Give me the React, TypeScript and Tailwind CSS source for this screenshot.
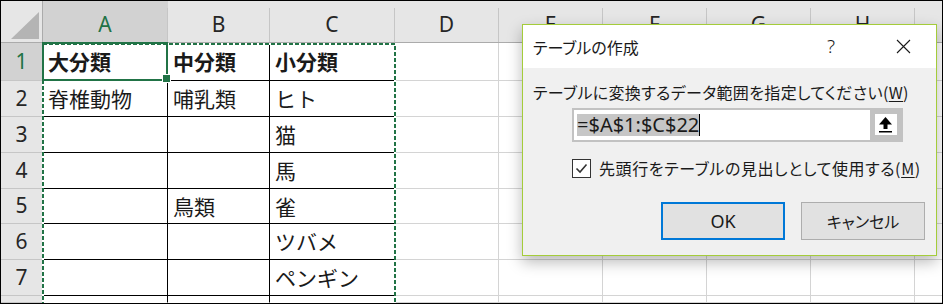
const cols = ['A', 'B', 'C', 'D', 'E', 'F', 'G', 'H', 'I'];

const rows = [
  { n: '1', cells: ['大分類', '中分類', '小分類'], bold: true },
  { n: '2', cells: ['脊椎動物', '哺乳類', 'ヒト'] },
  { n: '3', cells: ['', '', '猫'] },
  { n: '4', cells: ['', '', '馬'] },
  { n: '5', cells: ['', '鳥類', '雀'] },
  { n: '6', cells: ['', '', 'ツバメ'] },
  { n: '7', cells: ['', '', 'ペンギン'] },
  { n: '', cells: ['', '', ''] },
];

function Sheet() {
  return (
    <div className="grid h-full w-[1050px] grid-cols-[42px_125px_102px_125px_104px_104px_104px_104px_104px_104px] grid-rows-[42px_38px_36px_36px_36px_35px_36px_36px_1fr]">
      {/* corner */}
      <div className="border-b border-r border-[#ababab] bg-[#e6e6e6]">
        <svg width="41" height="41" viewBox="0 0 41 41">
          <polygon points="38,11 38,38 10,38" fill="#b4b4b4" />
        </svg>
      </div>
      {cols.map((c) => (
        <div key={c} className={`flex flex-col border-b border-[#ababab] ${c === 'A' ? 'bg-[#d2d2d2]' : 'bg-[#e6e6e6]'}`}>
          <div className="h-[7px]" />
          <div className={`flex flex-1 items-center justify-center border-r border-[#c6c6c6] font-['Noto_Sans',sans-serif] text-[21px] ${c === 'A' ? 'text-[#217346]' : 'text-[#262626]'}`}>
            {c}
          </div>
        </div>
      ))}
      {rows.map((r, ri) => (
        <div key={ri} className="contents">
          <div className={`flex items-center justify-center border-b border-r border-b-[#c6c6c6] border-r-[#ababab] font-['Noto_Sans',sans-serif] text-[21px] ${ri === 0 ? 'bg-[#d2d2d2] text-[#217346]' : 'bg-[#e6e6e6] text-[#262626]'}`}>
            {r.n}
          </div>
          {cols.map((c, ci) => {
            const inTable = ci < 3;
            return (
              <div
                key={c}
                className={`flex items-center overflow-hidden whitespace-nowrap border-b border-r pl-[5px] font-['Noto_Sans_CJK_JP',sans-serif] text-[21px] leading-none text-[#1a1a1a] ${inTable ? (ri < 7 ? 'border-b-black' : 'border-b-transparent') : 'border-b-[#d4d4d4]'} ${ci < 2 ? 'border-r-black' : 'border-r-[#d4d4d4]'} ${r.bold ? 'font-bold' : ''}`}
              >
                {inTable ? r.cells[ci] : ''}
              </div>
            );
          })}
        </div>
      ))}
    </div>
  );
}

function CreateTableDialog() {
  return (
    <div className="absolute left-[521px] top-[23px] flex h-[232px] w-[415px] flex-col border border-[#a4cc3a] bg-[#f0f0f0] font-['Noto_Sans_CJK_JP',sans-serif] text-[#1a1a1a] shadow-[0_6px_14px_rgba(0,0,0,0.28)] [font-feature-settings:'palt']">
      <div className="flex h-[43px] items-center bg-white pl-[10px] pr-[10px]">
        <span className="text-[16px]">テーブルの作成</span>
        <span className="ml-auto mr-[29px] w-[40px] text-center font-['Noto_Sans',sans-serif] text-[19px] font-light">?</span>
        <div className="flex w-[46px] items-center justify-center">
          <svg width="15" height="15" viewBox="0 0 15 15">
            <path d="M1 1L14 14M14 1L1 14" stroke="#1a1a1a" strokeWidth="1.1" />
          </svg>
        </div>
      </div>
      <div className="flex flex-1 flex-col pl-[10px] pr-[11px] pt-[14px]">
        <div className="h-[20px] text-[16px] leading-[20px] tracking-[0.35px]">
          テーブルに変換するデータ範囲を指定してください(<span className="underline underline-offset-2">W</span>)
        </div>
        <div className="ml-[39px] mt-[6px] flex h-[34px] w-[331px] border-2 border-[#c2c2c2] bg-white">
          <div className="flex flex-1 items-center pl-[3px]">
            <span className="bg-[#c6c6c6] font-['Noto_Sans',sans-serif] text-[20px] leading-[22px]">=$A$1:$C$22</span>
            <span className="h-[22px] w-px bg-black" />
          </div>
          <div className="flex w-[31px] items-start bg-[#c2c2c2] pl-[5px] pt-[4px]">
            <div className="h-[21px] w-[22px] bg-white">
              <svg width="22" height="21" viewBox="0 0 22 21">
                <polygon points="4,10.5 10.5,3 17,10.5" fill="#000" />
                <rect x="8.5" y="10" width="4" height="5" fill="#000" />
                <rect x="4" y="17" width="13" height="1.5" fill="#000" />
              </svg>
            </div>
          </div>
        </div>
        <div className="ml-[39px] mt-[16px] flex items-center">
          <div className="h-[19px] w-[19px] border border-[#333] bg-white">
            <svg width="17" height="17" viewBox="0 0 17 17">
              <path d="M3.5 8.5L7 12L13.5 4.5" fill="none" stroke="#333" strokeWidth="1.6" />
            </svg>
          </div>
          <span className="ml-[8px] text-[16px] leading-[20px] tracking-[0.6px]">
            先頭行をテーブルの見出しとして使用する(<span className="underline underline-offset-2">M</span>)
          </span>
        </div>
        <div className="mt-[24px] flex justify-end gap-[16px]">
          <button className="flex h-[38px] w-[124px] items-center justify-center border-2 border-[#0078d7] bg-[#e1e1e1] font-['Noto_Sans',sans-serif] text-[18px]">
            OK
          </button>
          <button className="flex h-[38px] w-[124px] items-center justify-center border border-[#adadad] bg-[#e1e1e1] text-[16px]">
            キャンセル
          </button>
        </div>
      </div>
    </div>
  );
}

export default function App() {
  return (
    <div className="relative h-[304px] w-[943px] overflow-hidden border border-black bg-white">
      <Sheet />
      {/* marching ants around A1:C22 */}
      <svg className="absolute left-[40px] top-[41px]" width="356" height="270" viewBox="0 0 356 270">
        <rect x="2" y="2" width="352" height="400" fill="none" stroke="#fff" strokeWidth="2" />
        <rect x="2" y="2" width="352" height="400" fill="none" stroke="#217346" strokeWidth="2" strokeDasharray="4 2" />
      </svg>
      {/* active cell A1 */}
      <div className="absolute left-[41px] top-[41px] h-[39px] w-[126px] border-2 border-[#217346]" />
      <div className="absolute left-[161px] top-[73px] h-[9px] w-[9px] border border-white bg-[#217346]" />
      <CreateTableDialog />
    </div>
  );
}
